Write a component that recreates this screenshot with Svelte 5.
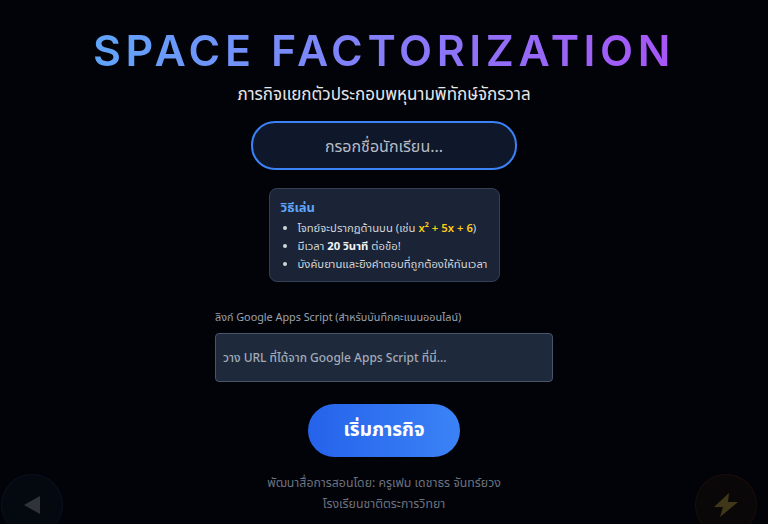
<script>
  let name = $state("");
  let url = $state("");

  const rules = [
    { id: "eq" },
    { id: "time" },
    { id: "fly" },
  ];
</script>

<main class="screen">
  <h1 class="title">SPACE FACTORIZATION</h1>
  <p class="subtitle">ภารกิจแยกตัวประกอบพหุนามพิทักษ์จักรวาล</p>

  <input class="name-input" type="text" placeholder="กรอกชื่อนักเรียน..." bind:value={name} />

  <section class="howto">
    <h2>วิธีเล่น</h2>
    <ul>
      {#each rules as rule}
        <li>
          {#if rule.id === "eq"}
            โจทย์จะปรากฏด้านบน (เช่น <span class="eq">x² + 5x + 6</span>)
          {:else if rule.id === "time"}
            มีเวลา <strong>20 วินาที</strong> ต่อข้อ!
          {:else}
            บังคับยานและยิงคำตอบที่ถูกต้องให้ทันเวลา
          {/if}
        </li>
      {/each}
    </ul>
  </section>

  <div class="url-field">
    <label for="script-url">ลิงก์ Google Apps Script (สำหรับบันทึกคะแนนออนไลน์)</label>
    <input id="script-url" type="text" placeholder="วาง URL ที่ได้จาก Google Apps Script ที่นี่..." bind:value={url} />
  </div>

  <button class="start">เริ่มภารกิจ</button>

  <footer class="credit">
    <p>พัฒนาสื่อการสอนโดย: ครูเฟม เดชาธร จันทร์ยวง</p>
    <p>โรงเรียนชาติตระการวิทยา</p>
  </footer>

  <button class="pad left" aria-label="left">
    <svg viewBox="0 0 16 18" width="16" height="18"><path d="M16 0v18L0 9z" fill="#9aa3ad" /></svg>
  </button>
  <button class="pad right" aria-label="fire">
    <svg viewBox="0 0 26 26" width="26" height="26"><path d="M16 1 1 15h9L7 25l18-15h-10z" fill="#d0b040" /></svg>
  </button>
</main>

<style>
  :global(body) {
    margin: 0;
    background: #020308;
  }

  .screen {
    position: relative;
    width: 768px;
    height: 524px;
    overflow: hidden;
    display: flex;
    flex-direction: column;
    align-items: center;
    box-sizing: border-box;
    padding-top: 26px;
    background: #020308;
    color: #e5e7eb;
    font-family: "Noto Sans", "Noto Sans Thai", "DejaVu Sans", sans-serif;
  }

  .title {
    margin: 0;
    height: 48px;
    font-family: "Inter", sans-serif;
    font-size: 43px;
    line-height: 48px;
    font-weight: 600;
    letter-spacing: 4.6px;
    white-space: nowrap;
    background: linear-gradient(90deg, #60a5fa, #a855f7);
    -webkit-background-clip: text;
    background-clip: text;
    color: transparent;
  }

  .subtitle {
    margin: 9px 0 0;
    font-size: 17px;
    line-height: 22px;
    color: #e5e7eb;
  }

  .name-input {
    box-sizing: border-box;
    width: 266px;
    height: 49px;
    margin-top: 16px;
    border: 2px solid #3b82f6;
    border-radius: 24px;
    background: #0f172a;
    color: #e5e7eb;
    text-align: center;
    font: inherit;
    font-size: 16px;
    outline: none;
  }

  .name-input::placeholder {
    color: #b6bcc6;
    opacity: 1;
  }

  .howto {
    box-sizing: border-box;
    width: 231px;
    height: 94px;
    margin-top: 18px;
    padding: 10px 11px;
    border: 1px solid #334155;
    border-radius: 8px;
    background: #1a2436;
  }

  .howto h2 {
    margin: 0 0 3px;
    font-size: 13px;
    line-height: 17px;
    font-weight: 700;
    color: #60a5fa;
  }

  .howto ul {
    margin: 0;
    padding-left: 17px;
    font-size: 11.3px;
    line-height: 18px;
    color: #d1d5db;
    white-space: nowrap;
  }

  .howto strong {
    color: #f3f4f6;
  }

  .eq {
    color: #facc15;
    font-weight: 600;
  }

  .url-field {
    width: 338px;
    margin-top: 28px;
    display: flex;
    flex-direction: column;
    gap: 9px;
  }

  .url-field label {
    font-size: 10.8px;
    line-height: 14px;
    color: #9ca3af;
    white-space: nowrap;
  }

  .url-field input {
    box-sizing: border-box;
    width: 100%;
    height: 49px;
    padding: 0 7px;
    border: 1px solid #475569;
    border-radius: 4px;
    background: #1e293b;
    color: #e5e7eb;
    font: inherit;
    font-size: 12px;
    font-weight: 500;
    outline: none;
  }

  .url-field input::placeholder {
    color: #a3abb8;
    opacity: 1;
  }

  .start {
    width: 152px;
    height: 53px;
    margin-top: 22px;
    border: none;
    border-radius: 27px;
    background: linear-gradient(90deg, #2563eb, #3b82f6);
    color: #fff;
    font: inherit;
    font-size: 19px;
    font-weight: 700;
  }

  .credit {
    margin-top: 16px;
    text-align: center;
    font-size: 12.3px;
    line-height: 20.5px;
    color: #6b7280;
  }

  .credit p {
    margin: 0;
  }

  .pad {
    position: absolute;
    top: 474px;
    width: 62px;
    height: 62px;
    padding: 0;
    display: flex;
    align-items: center;
    justify-content: center;
    border-radius: 50%;
    border: 1px solid transparent;
    opacity: 0.3;
  }

  .pad.left {
    left: 1px;
    background: rgba(30, 58, 90, 0.3);
    border-color: rgba(59, 130, 246, 0.25);
  }

  .pad.right {
    left: 695px;
    background: rgba(90, 50, 20, 0.3);
    border-color: rgba(234, 88, 12, 0.25);
  }
</style>
